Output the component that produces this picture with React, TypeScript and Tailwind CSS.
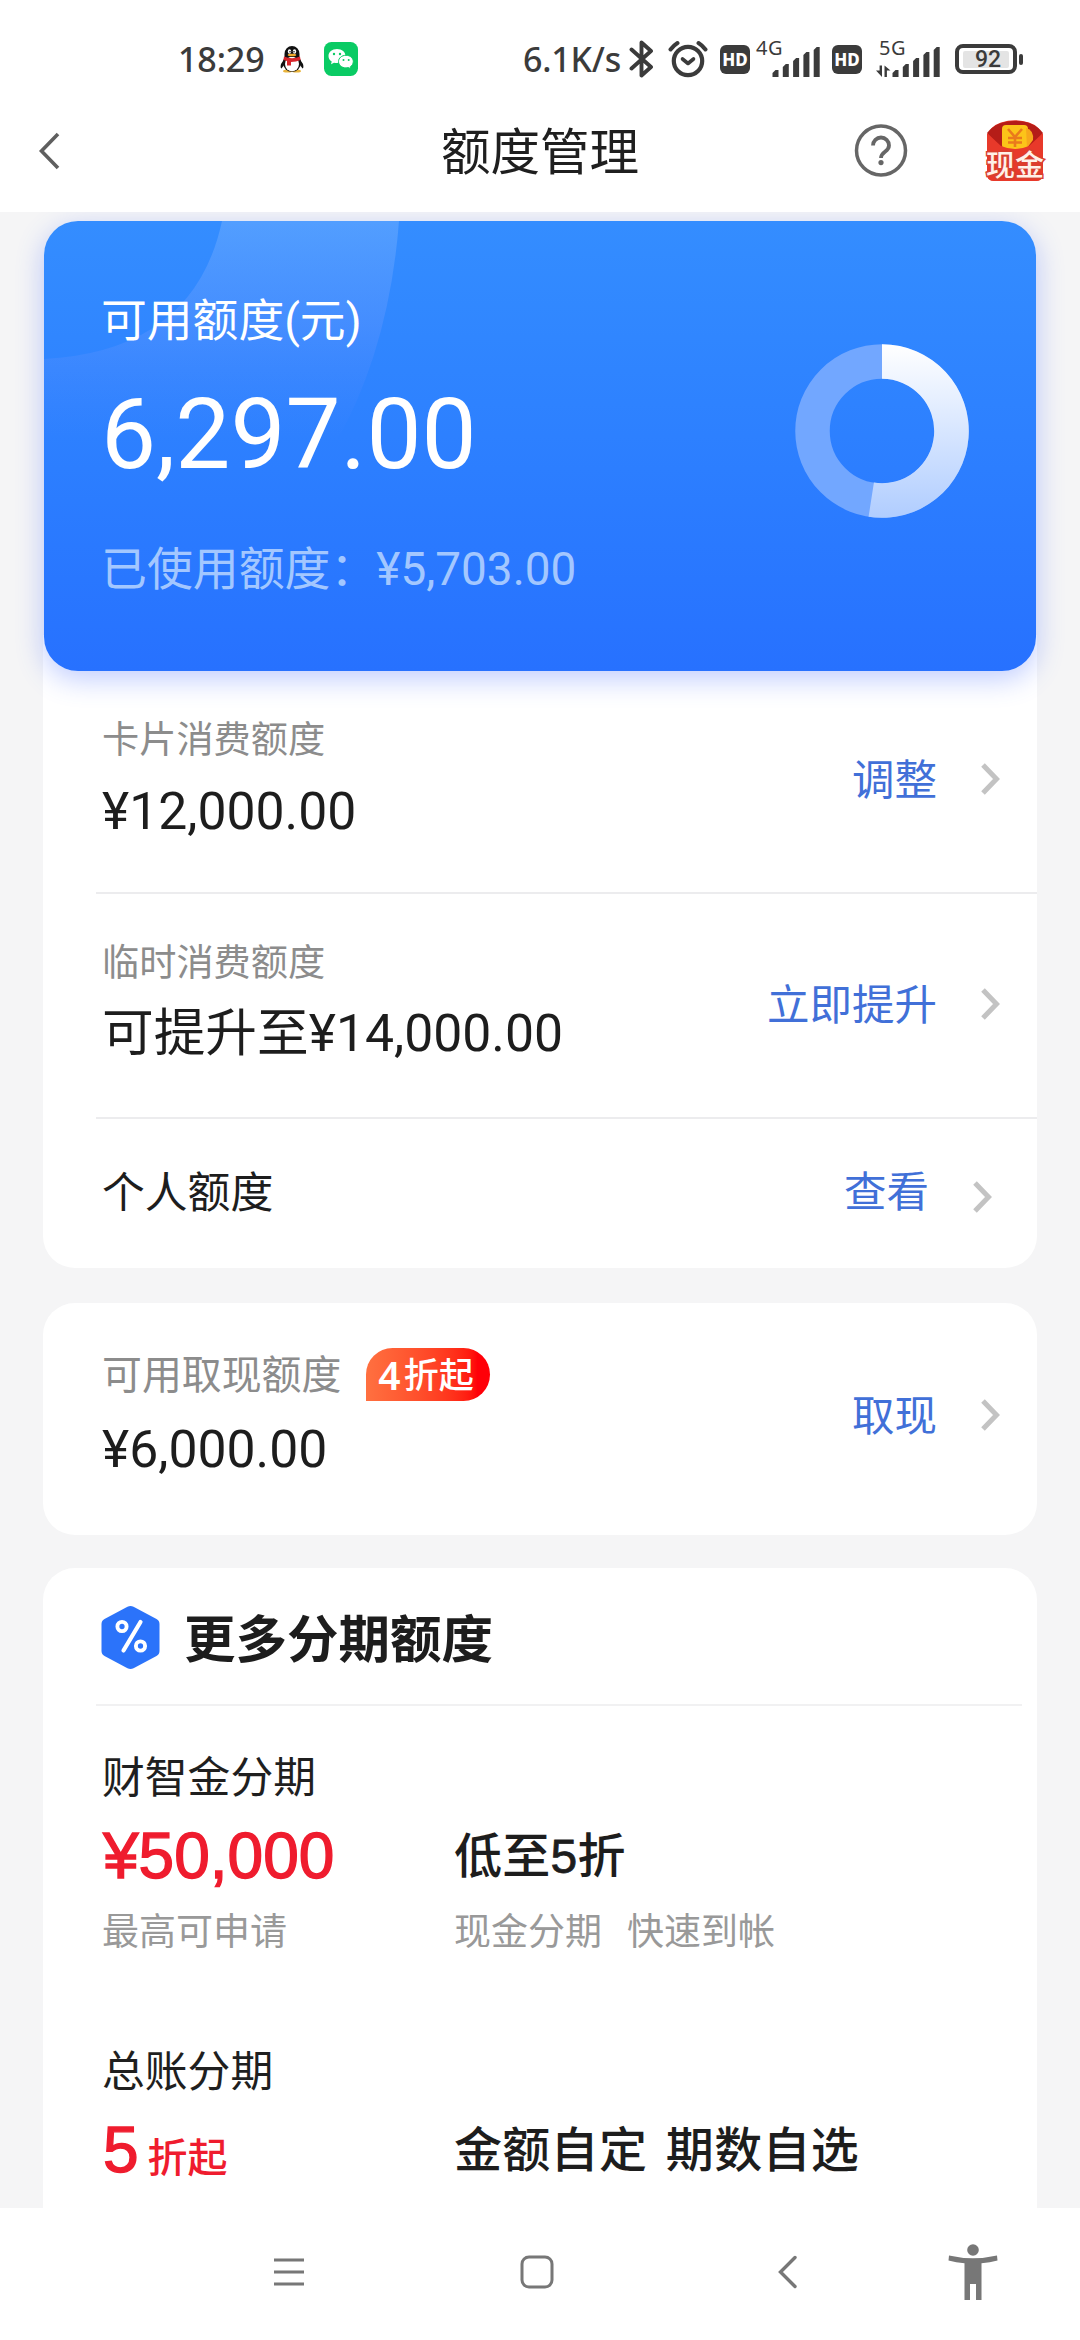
import type { ReactNode } from "react";

const INK = "#3b3b3b";

function Chevron({ className = "" }: { className?: string }) {
  return (
    <svg className={className} width="22" height="34" viewBox="0 0 22 34" fill="none">
      <path d="M4 3 17.500 17 4 31" stroke="#c3c3c3" strokeWidth="5" />
    </svg>
  );
}

function QQ() {
  return (
    <svg width="24" height="28" viewBox="0 0 24 28">
      <ellipse cx="7.5" cy="26" rx="4.5" ry="1.6" fill="#e9b43c" />
      <ellipse cx="16.5" cy="26" rx="4.5" ry="1.6" fill="#e9b43c" />
      <path d="M5 13 1 19q-1 4 .5 4.500L4 20zM19 13l4 6q1 4-.5 4.500L20 20z" fill="#111" />
      <ellipse cx="12" cy="18" rx="9" ry="8.800" fill="#111" />
      <ellipse cx="12" cy="19" rx="7" ry="7.300" fill="#fff" />
      <path d="M4.500 12V9a7.500 8 0 0 1 15 0v3z" fill="#111" />
      <ellipse cx="9.500" cy="6.500" rx="1.700" ry="2.300" fill="#fff" />
      <ellipse cx="14.500" cy="6.500" rx="1.700" ry="2.300" fill="#fff" />
      <circle cx="10" cy="6.800" r=".8" fill="#111" />
      <circle cx="14" cy="6.800" r=".8" fill="#111" />
      <ellipse cx="12" cy="10" rx="4.300" ry="1.300" fill="#f0a92c" />
      <path d="M4 11.500q8 3.500 16 0l.6 3.500q-4.500 2-9.600 2v3.500H7V16l-3.600-1z" fill="#d7262c" />
    </svg>
  );
}

function WeChat() {
  return (
    <svg width="34" height="34" viewBox="0 0 34 34">
      <rect width="34" height="34" rx="7.500" fill="#0acb64" />
      <path d="M13 7C8 7 4.500 10 4.500 14c0 2.300 1.200 4.300 3.200 5.600L7 22.200l3-1.500c1 .3 2 .4 3 .4 5 0 8.500-3 8.500-7S18 7 13 7z" fill="#fff" />
      <circle cx="10" cy="12" r="1.200" fill="#0acb64" />
      <circle cx="16" cy="12" r="1.200" fill="#0acb64" />
      <path d="M22 13.300c-4.300 0-7.500 2.800-7.500 6.300s3.200 6.300 7.500 6.300c.9 0 1.700-.1 2.500-.3l2.600 1.300-.7-2.200c1.800-1.200 2.900-3 2.900-5.100 0-3.500-3-6.300-7.300-6.300z" fill="#fff" stroke="#0acb64" strokeWidth="1" />
      <circle cx="19.500" cy="18" r="1" fill="#0acb64" />
      <circle cx="24.700" cy="18" r="1" fill="#0acb64" />
    </svg>
  );
}

function Bluetooth() {
  return (
    <svg width="25" height="40" viewBox="0 0 25 40" fill="none">
      <path d="M2.500 10.500 22 28 12.500 36.500V3.500L22 12 2.500 29.500" stroke={INK} strokeWidth="3.900" strokeLinejoin="round" strokeLinecap="round" />
    </svg>
  );
}

function Alarm() {
  return (
    <svg width="40" height="38" viewBox="0 0 40 38" fill="none" stroke={INK} strokeLinecap="round">
      <circle cx="20" cy="21" r="14.200" strokeWidth="4.200" />
      <path d="m14.500 19 5.500 4.500 5.500-4.500" strokeWidth="3.600" strokeLinejoin="round" />
      <path d="M2.500 9.500q3-4 7-6.500M37.500 9.500q-3-4-7-6.500" strokeWidth="4" />
    </svg>
  );
}

function HD() {
  return (
    <div className="flex h-[29px] w-[30px] items-center justify-center rounded-[6px] bg-[#3b3b3b] font-['Noto_Sans'] text-[17px] font-extrabold leading-none text-white">
      HD
    </div>
  );
}

function Signal({ label, arrows }: { label: string; arrows?: boolean }) {
  const bars = [7, 13, 19, 25, 30];
  return (
    <div className="relative h-[35px] w-[64px]">
      <span className={`absolute -top-px font-['Noto_Sans'] text-[20px] leading-[14px] font-normal tracking-[0.6px] text-[#3b3b3b] ${arrows ? "left-[3px]" : "left-0"}`}>{label}</span>
      <svg className="absolute right-0 bottom-0" width="64" height="32" viewBox="0 0 64 32" fill={INK}>
        {bars.map((h, i) => (
          <path key={h} d={`M${16.500 + i * 10.300} 32v-${h - 3}l3-3h3v${h}z`} />
        ))}
        {arrows && <path d="M6 32V20.500H3.600V25.500H0zM8.500 20.500V32h2.400V25.500h3.600z" />}
      </svg>
    </div>
  );
}

function Battery() {
  return (
    <div className="flex items-center">
      <div className="flex h-[30px] w-[62px] items-center justify-center rounded-[8px] border-4 border-[#3b3b3b]">
        <div className="flex h-[17px] w-[46px] items-center justify-center rounded-[2px] bg-[#e4e4e4] pl-1 font-['Roboto'] text-[23px] font-medium leading-[17px] text-[#3b3b3b]">
          92
        </div>
      </div>
      <div className="ml-[2px] h-[11px] w-[4px] rounded-[2px] bg-[#3b3b3b]" />
    </div>
  );
}

function StatusBar() {
  return (
    <div className="flex h-[118px] items-center pl-[178px] font-['Noto_Sans'] text-[34px] font-medium text-[#3b3b3b]">
      <span className="w-[102px] tracking-[-0.1px] whitespace-nowrap">18:29</span>
      <QQ />
      <span className="ml-[20px]">
        <WeChat />
      </span>
      <span className="ml-[165px] w-[106px] tracking-[-0.2px] whitespace-nowrap">6.1K/s</span>
      <Bluetooth />
      <span className="ml-[14px]">
        <Alarm />
      </span>
      <span className="ml-[12px]">
        <HD />
      </span>
      <span className="ml-[6px]">
        <Signal label="4G" />
      </span>
      <span className="ml-[12px]">
        <HD />
      </span>
      <span className="ml-[14px]">
        <Signal label="5G" arrows />
      </span>
      <span className="ml-[15px]">
        <Battery />
      </span>
    </div>
  );
}

function CashIcon() {
  return (
    <div className="relative h-[62px] w-[62px]">
      <svg width="62" height="62" viewBox="0 0 62 62">
        <path d="M3 17Q6 6 17 2.500 31-2 45 2.500 56 6 59 17V54q0 7-7 7H10q-7 0-7-7z" fill="#e63426" />
        <path d="M3 13Q12 1 31 1t28 12L46 28H17z" fill="#b51d18" />
        <rect x="18" y="5" width="26" height="24" rx="4" fill="#fcc419" />
        <path d="M42 8q8 2 7 12l-6 8z" fill="#f7a81b" />
        <path d="m24 9 7 8 7-8M31 17v10M24 18h14M24 22.500h14" stroke="#ea7a1c" strokeWidth="2.600" fill="none" />
        <path d="m3 13 14 13q14 6 28 0l14-13v41q0 7-7 7H10q-7 0-7-7z" fill="#e8392a" />
      </svg>
      <span className="absolute top-[31px] left-[2px] text-[29px] leading-[30px] font-medium whitespace-nowrap text-[#fff1e8] [paint-order:stroke_fill] [-webkit-text-stroke:3px_#d9402f]">
        现金
      </span>
    </div>
  );
}

function Header() {
  return (
    <div className="flex h-[94px] items-start bg-white">
      <svg className="mt-[12px] ml-[37px]" width="26" height="42" viewBox="0 0 26 42" fill="none">
        <path d="M21 4 4.500 21 21 38" stroke="#5f5f5f" strokeWidth="3.600" />
      </svg>
      <h1 className="mt-[5px] ml-[378px] w-[198px] text-[49.5px] leading-[60px] font-normal whitespace-nowrap text-[#1f1f1f]">额度管理</h1>
      <div className="mt-[6px] ml-[215px]">
        <svg width="54" height="54" viewBox="0 0 54 54" fill="none" stroke="#666" strokeWidth="3.500">
          <circle cx="27" cy="26.500" r="24.500" />
          <path d="M19 21.500a8 8 0 0 1 16 0c0 6.500-8 6-8 12.500" strokeWidth="3.800" />
          <circle cx="27" cy="38.600" r="2.600" fill="#666" stroke="none" />
        </svg>
      </div>
      <span className="mt-[2px] ml-[76px]">
        <CashIcon />
      </span>
    </div>
  );
}

function Donut() {
  const used = (188.9 * Math.PI) / 180;
  const p = (r: number, a: number) => `${88 + r * Math.sin(a)} ${88 - r * Math.cos(a)}`;
  return (
    <svg width="176" height="176" viewBox="0 0 176 176">
      <defs>
        <linearGradient id="ring" x1="0" y1="0" x2="0" y2="1">
          <stop offset="0" stopColor="#fff" />
          <stop offset="1" stopColor="#b0cdff" />
        </linearGradient>
      </defs>
      <circle cx="88" cy="88" r="69.500" fill="none" stroke="#72a7ff" strokeWidth="34.500" />
      <path d={`M${p(86.8, 0)}A86.800 86.800 0 1 1 ${p(86.8, used)}L${p(52.2, used)}A52.200 52.200 0 1 0 ${p(52.2, 0)}z`} fill="url(#ring)" />
    </svg>
  );
}

function BalanceCard() {
  return (
    <div className="relative mx-[44px] h-[450px] rounded-[34px] shadow-[0_8px_28px_rgba(60,100,255,0.33)]">
      <div className="relative flex h-full overflow-hidden rounded-[34px] bg-linear-to-b from-[#348dff] to-[#2771ff] pl-[57px]">
        <svg className="absolute top-0 left-0" width="380" height="260" viewBox="0 0 380 260">
          <defs>
            <linearGradient id="arc" x1="0" y1="0" x2="0" y2="1">
              <stop offset="0" stopColor="#fff" stopOpacity=".15" />
              <stop offset=".4" stopColor="#c8b8ff" stopOpacity=".13" />
              <stop offset=".85" stopColor="#a090ff" stopOpacity="0" />
            </linearGradient>
          </defs>
          <path d="M178 0H355Q345 130 290 225L260 260H0V138Q150 130 178 0z" fill="url(#arc)" />
        </svg>
        <div className="relative flex-1 text-white">
          <div className="mt-[71px] text-[45.8px] leading-[60px]">可用额度(元)</div>
          <div className="mt-[26px] text-[98px] leading-[114px]">6,297.00</div>
          <div className="mt-[47px] text-[45.9px] leading-[60px] text-[#a3c7ff]">已使用额度：¥5,703.00</div>
        </div>
        <div className="relative mt-[122px] mr-[66px]">
          <Donut />
        </div>
      </div>
    </div>
  );
}

function Action({ children, className = "" }: { children: ReactNode; className?: string }) {
  return (
    <div className={`flex items-center text-[42.5px] leading-[50px] text-[#4170d8] ${className}`}>
      <span className="mt-[3px] mr-[42px]">{children}</span>
      <Chevron />
    </div>
  );
}

function Offer({ name, price, sub, title, note }: { name: string; price: ReactNode; sub?: ReactNode; title: ReactNode; note?: ReactNode }) {
  return (
    <div className="h-[294px]">
      <div className="text-[42.8px] leading-[50px] text-[#1f1f1f]">{name}</div>
      <div className="flex">
        <div className="w-[352px]">
          <div className="mt-[17px] h-[72px] pl-px leading-[72px] font-medium whitespace-nowrap text-[#ef1c2e]">{price}</div>
          <div className="mt-[19px] text-[37px] leading-[44px] text-[#999]">{sub}</div>
        </div>
        <div>
          <div className="mt-[18px] h-[72px] font-['Liberation_Sans','Noto_Sans_CJK_SC',sans-serif] text-[48px] leading-[72px] font-medium tracking-[0.3px] whitespace-nowrap [word-spacing:5px] text-[#1d1d1d]">{title}</div>
          <div className="mt-[18px] flex gap-[25px] text-[37px] leading-[44px] text-[#999]">{note}</div>
        </div>
      </div>
    </div>
  );
}

function NavBar() {
  return (
    <div className="flex h-[132px] items-center bg-white pb-[5px] pl-[273px]">
      <svg width="32" height="32" viewBox="0 0 32 32" stroke="#777" strokeWidth="3">
        <path d="M1 4h30M1 16h30M1 28h30" />
      </svg>
      <svg className="ml-[214px]" width="36" height="36" viewBox="0 0 36 36" fill="none">
        <rect x="3" y="3" width="30" height="30" rx="7" stroke="#777" strokeWidth="3" />
      </svg>
      <svg className="ml-[223px]" width="24" height="36" viewBox="0 0 24 36" fill="none">
        <path d="M17 3.500 2.500 18 17 32.500" stroke="#777" strokeWidth="3.400" strokeLinecap="round" />
      </svg>
      <svg className="ml-[145px]" width="52" height="58" viewBox="0 0 52 58" fill="#777">
        <circle cx="26" cy="7" r="5.800" />
        <path d="M2 12.500q24 5.500 48 0l.5 5q-7.500 2-16 2.800V57h-5.500V41h-6v16h-5.500V20.300q-8.500-.8-16-2.800z" />
      </svg>
    </div>
  );
}

export default function App() {
  return (
    <div className="flex h-[2340px] w-[1080px] flex-col overflow-hidden bg-white font-['Roboto','Noto_Sans_CJK_SC',sans-serif]">
      <StatusBar />
      <Header />
      <main className="h-[1996px] overflow-hidden bg-[#f5f5f6] pt-[9px]">
        <BalanceCard />
        <section className="mx-[43px] -mt-[36px] rounded-b-[32px] bg-white pt-[36px] pl-[59px]">
          <div className="-ml-[6px] flex h-[223px] justify-between border-b-2 border-[#ececee] pl-[6px]">
            <div>
              <div className="mt-[47px] text-[37.2px] leading-[44px] text-[#8c8c8c]">卡片消费额度</div>
              <div className="mt-[20px] text-[51.7px] leading-[60px] text-[#1d1d1d]">¥12,000.00</div>
            </div>
            <Action className="mt-[83px] mr-[36px] h-[50px]">调整</Action>
          </div>
          <div className="-ml-[6px] flex h-[225px] justify-between border-b-2 border-[#ececee] pl-[6px]">
            <div>
              <div className="mt-[47px] text-[37.2px] leading-[44px] text-[#8c8c8c]">临时消费额度</div>
              <div className="mt-[19px] text-[51.7px] leading-[60px] text-[#1d1d1d]">可提升至¥14,000.00</div>
            </div>
            <Action className="mt-[85px] mr-[36px] h-[50px]">立即提升</Action>
          </div>
          <div className="flex h-[149px] justify-between">
            <div className="mt-[49px] text-[42.8px] leading-[50px] text-[#1d1d1d]">个人额度</div>
            <div className="mt-[49px] mr-[44px] flex text-[42.5px] leading-[50px] text-[#4170d8]">
              <span className="mr-[42px]">查看</span>
              <Chevron className="mt-[12px]" />
            </div>
          </div>
        </section>

        <section className="mx-[43px] mt-[35px] flex h-[232px] justify-between rounded-[32px] bg-white pl-[59px]">
          <div>
            <div className="mt-[45px] flex h-[56px] items-center text-[39.9px] leading-[56px] text-[#8c8c8c]">
              可用取现额度
              <span className="-mt-[3px] ml-[25px] flex h-[53px] w-[124px] items-center rounded-[27px] rounded-bl-none bg-linear-to-r from-[#ff7040] to-[#ff0008] to-90% pl-[12px] font-['Noto_Sans','Noto_Sans_CJK_SC',sans-serif] text-[35px] leading-[53px] font-medium text-white">
                <b className="mr-[3px] text-[39px] font-semibold">4</b>折起
              </span>
            </div>
            <div className="mt-[16px] text-[51.7px] leading-[60px] text-[#1d1d1d]">¥6,000.00</div>
          </div>
          <Action className="mt-[87px] mr-[36px] h-[50px]">取现</Action>
        </section>

        <section className="mx-[43px] mt-[33px] rounded-t-[32px] bg-white pl-[59px]">
          <div className="mr-[15px] -ml-[6px] flex h-[138px] items-start border-b-2 border-[#f1f1f2] pl-[5px]">
            <svg className="mt-[37px]" width="59" height="65" viewBox="0 0 59 65" fill="none">
              <path d="M26.500 1.700q3-1.500 6 0L55.500 14q3 1.700 3 5v27q0 3.300-3 5L32.500 63.300q-3 1.500-6 0L3.500 51q-3-1.700-3-5V19q0-3.300 3-5z" fill="#2b73fa" />
              <g stroke="#fff" strokeWidth="3.900" strokeLinecap="round">
                <circle cx="21" cy="21.500" r="4.600" />
                <circle cx="39.500" cy="41" r="4.600" />
                <path d="M39.500 17 22.500 45.500" strokeWidth="4.200" />
              </g>
            </svg>
            <h2 className="mt-[43px] ml-[24px] text-[51.500px] leading-[60px] font-bold text-[#1d1d1d]">更多分期额度</h2>
          </div>
          <div className="pt-[47px]">
            <Offer
              name="财智金分期"
              price={<span className="font-['Liberation_Sans',sans-serif] text-[64px] font-normal [-webkit-text-stroke:1.4px_#ef1c2e]">¥50,000</span>}
              sub="最高可申请"
              title={
                <>
                  低至<span className="[-webkit-text-stroke:0.8px_#1d1d1d]">5</span>折
                </>
              }
              note={
                <>
                  <span>现金分期</span>
                  <span>快速到帐</span>
                </>
              }
            />
            <Offer
              name="总账分期"
              price={
                <>
                  <span className="font-['Liberation_Sans',sans-serif] text-[64px] font-normal [-webkit-text-stroke:1.4px_#ef1c2e]">5</span>
                  <span className="ml-[9px] text-[40px]">折起</span>
                </>
              }
              title="金额自定 期数自选"
            />
          </div>
        </section>
      </main>
      <NavBar />
    </div>
  );
}
